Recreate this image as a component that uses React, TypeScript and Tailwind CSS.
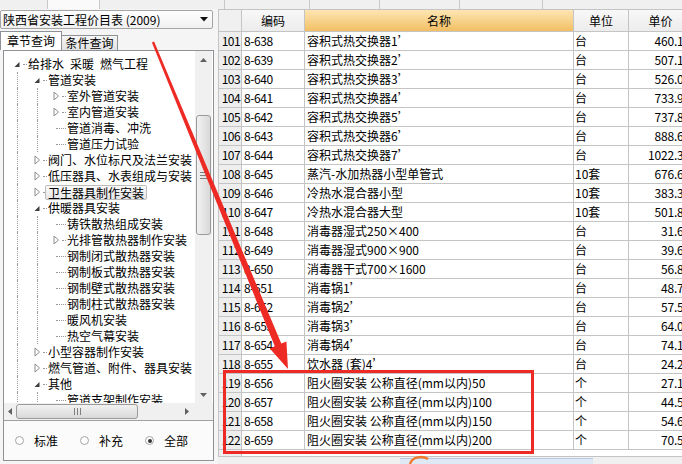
import React from 'react';

type TreeItem = { t: string; lv: number; k: 'open' | 'closed' | 'leaf'; sel?: boolean };

const tree: TreeItem[] = [
  { t: '给排水\u2002采暖\u2002燃气工程', lv: 0, k: 'open' },
  { t: '管道安装', lv: 1, k: 'open' },
  { t: '室外管道安装', lv: 2, k: 'closed' },
  { t: '室内管道安装', lv: 2, k: 'closed' },
  { t: '管道消毒、冲洗', lv: 2, k: 'leaf' },
  { t: '管道压力试验', lv: 2, k: 'leaf' },
  { t: '阀门、水位标尺及法兰安装', lv: 1, k: 'closed' },
  { t: '低压器具、水表组成与安装', lv: 1, k: 'closed' },
  { t: '卫生器具制作安装', lv: 1, k: 'closed', sel: true },
  { t: '供暖器具安装', lv: 1, k: 'open' },
  { t: '铸铁散热组成安装', lv: 2, k: 'leaf' },
  { t: '光排管散热器制作安装', lv: 2, k: 'closed' },
  { t: '钢制闭式散热器安装', lv: 2, k: 'leaf' },
  { t: '钢制板式散热器安装', lv: 2, k: 'leaf' },
  { t: '钢制壁式散热器安装', lv: 2, k: 'leaf' },
  { t: '钢制柱式散热器安装', lv: 2, k: 'leaf' },
  { t: '暖风机安装', lv: 2, k: 'leaf' },
  { t: '热空气幕安装', lv: 2, k: 'leaf' },
  { t: '小型容器制作安装', lv: 1, k: 'closed' },
  { t: '燃气管道、附件、器具安装', lv: 1, k: 'closed' },
  { t: '其他', lv: 1, k: 'open' },
  { t: '管道支架制作安装', lv: 2, k: 'leaf' },
];

const rows: string[][] = [
  ['101', '8-638', '容积式热交换器1’', '台', '460.18'],
  ['102', '8-639', '容积式热交换器2’', '台', '507.12'],
  ['103', '8-640', '容积式热交换器3’', '台', '526.04'],
  ['104', '8-641', '容积式热交换器4’', '台', '733.97'],
  ['105', '8-642', '容积式热交换器5’', '台', '737.85'],
  ['106', '8-643', '容积式热交换器6’', '台', '888.65'],
  ['107', '8-644', '容积式热交换器7’', '台', '1022.35'],
  ['108', '8-645', '蒸汽-水加热器小型单管式', '10套', '676.65'],
  ['109', '8-646', '冷热水混合器小型', '10套', '383.35'],
  ['110', '8-647', '冷热水混合器大型', '10套', '501.85'],
  ['111', '8-648', '消毒器湿式250×400', '台', '31.65'],
  ['112', '8-649', '消毒器湿式900×900', '台', '39.65'],
  ['113', '8-650', '消毒器干式700×1600', '台', '56.85'],
  ['114', '8-651', '消毒锅1’', '台', '48.75'],
  ['115', '8-652', '消毒锅2’', '台', '57.55'],
  ['116', '8-653', '消毒锅3’', '台', '64.05'],
  ['117', '8-654', '消毒锅4’', '台', '74.15'],
  ['118', '8-655', '饮水器 (套)4’', '台', '24.25'],
  ['119', '8-656', '阻火圈安装 公称直径(mm以内)50', '个', '27.15'],
  ['120', '8-657', '阻火圈安装 公称直径(mm以内)100', '个', '44.55'],
  ['121', '8-658', '阻火圈安装 公称直径(mm以内)150', '个', '54.65'],
  ['122', '8-659', '阻火圈安装 公称直径(mm以内)200', '个', '70.55'],
];

const pads = ['pl-[7px]', 'pl-[27px]', 'pl-[46px]'];

const Glyph = ({ k }: { k: TreeItem['k'] }) =>
  k === 'open' ? (
    <svg width="12" height="10" viewBox="0 0 12 10">
      <polygon points="8.5,3 8.5,8 3.5,8" fill="#3c3c3c" />
    </svg>
  ) : (
    <svg width="12" height="10" viewBox="0 0 12 10">
      <polygon points="4,1 8.5,5 4,9" fill="white" stroke="#8c8c8c" strokeWidth="1" />
    </svg>
  );

const TreeRow = ({ it }: { it: TreeItem }) => (
  <div className={`relative h-[16px] flex items-center whitespace-nowrap ${pads[it.lv]}`}>
    {it.lv >= 1 && <div className="absolute left-[13px] top-0 h-full border-l border-dotted border-[#9a9a9a]" />}
    {it.lv >= 2 && <div className="absolute left-[33px] top-0 h-full border-l border-dotted border-[#9a9a9a]" />}
    {it.k === 'leaf' ? (
      <div className="ml-[6px] w-[10px] border-t border-dotted border-[#9a9a9a] mr-[1px]" />
    ) : (
      <>
        <div className="w-[12px] flex justify-center">
          <Glyph k={it.k} />
        </div>
        <div className="w-[4px] border-t border-dotted border-[#9a9a9a] mr-[1px]" />
      </>
    )}
    {it.sel ? (
      <span className="border border-[#bcbcbc] rounded-[2px] bg-gradient-to-b from-[#fafafa] to-[#e6e6e6] px-[2px] leading-[13px] -ml-[3px]">
        {it.t}
      </span>
    ) : (
      <span className="leading-[16px]">{it.t}</span>
    )}
  </div>
);

const Radio = ({ label, on }: { label: string; on?: boolean }) => (
  <div className="flex items-center gap-[10px]">
    <div className="w-[9px] h-[9px] rounded-full border border-[#a4a4a4] bg-white flex items-center justify-center">
      {on && <div className="w-[4px] h-[4px] rounded-full bg-[#333]" />}
    </div>
    <span>{label}</span>
  </div>
);

export default function App() {
  return (
    <div className="relative w-[682px] h-[464px] overflow-hidden bg-[#f5f5f5] text-[12px] text-black font-['Noto_Sans_CJK_SC',sans-serif] flex flex-col">
      {/* toolbar strip */}
      <div className="h-[9px] flex bg-[#f0f0f0] shrink-0">
        <div className="w-[48px] border-r border-[#c8c8c8]" />
        <div className="w-[52px] border-r border-[#c8c8c8] bg-[#fafafa]" />
        <div className="w-[125px] border-r border-[#c8c8c8]" />
        <div className="w-[85px] border-r border-[#c8c8c8]" />
        <div className="w-[70px] border-r border-[#c8c8c8]" />
        <div className="w-[80px] border-r border-[#c8c8c8]" />
        <div className="w-[83px] border-r border-[#c8c8c8]" />
        <div className="flex-1" />
      </div>

      <div className="flex flex-1 min-h-0">
        {/* left panel */}
        <div className="w-[218px] shrink-0 flex flex-col">
          <div className="mt-[1px] h-[19px] w-[213px] border border-[#a5a5a5] rounded-[2px] bg-gradient-to-b from-[#ffffff] to-[#f0f0f0] flex items-center pl-[2px] pr-[4px]">
            <span className="flex-1 leading-[16px]">陕西省安装工程价目表 (2009)</span>
            <svg width="8" height="5" viewBox="0 0 8 5">
              <polygon points="0,0 8,0 4,4.5" fill="#111" />
            </svg>
          </div>
          <div className="h-[21px] flex items-end">
            <div className="h-[19px] w-[62px] border border-b-0 border-[#8e9297] bg-white flex items-center justify-center">
              章节查询
            </div>
            <div className="h-[15px] w-[56px] border border-b-0 border-l-0 border-[#8e9297] bg-gradient-to-b from-[#f6f6f6] to-[#e2e2e2] flex items-center justify-center">
              条件查询
            </div>
          </div>
          <div className="ml-[3px] w-[211px] h-[411px] border border-[#8e9297] bg-white flex flex-col">
            {/* tree */}
            <div className="h-[370px] flex flex-col border-b border-[#a0a0a0]">
              <div className="flex flex-1 min-h-0">
                <div className="flex-1 overflow-hidden pt-[5px]">
                  {tree.map((it, i) => (
                    <TreeRow key={i} it={it} />
                  ))}
                </div>
                <div className="w-[17px] mr-[1px] bg-[#f0f0f0] flex flex-col items-center">
                  <div className="h-[17px] flex items-center justify-center">
                    <svg width="7" height="4" viewBox="0 0 7 4">
                      <polygon points="3.5,0 7,4 0,4" fill="#606060" />
                    </svg>
                  </div>
                  <div className="mt-[47px] h-[120px] w-[15px] rounded-[3px] border border-[#9a9a9a] bg-gradient-to-r from-[#f2f2f2] to-[#d9d9d9] flex flex-col items-center justify-center gap-[2px]">
                    <div className="w-[7px] h-px bg-[#808080]" />
                    <div className="w-[7px] h-px bg-[#808080]" />
                    <div className="w-[7px] h-px bg-[#808080]" />
                  </div>
                  <div className="flex-1" />
                  <div className="h-[17px] flex items-center justify-center">
                    <svg width="7" height="4" viewBox="0 0 7 4">
                      <polygon points="0,0 7,0 3.5,4" fill="#606060" />
                    </svg>
                  </div>
                </div>
              </div>
              <div className="h-[17px] flex bg-[#f0f0f0]">
                <div className="w-[12px] flex items-center justify-center">
                  <svg width="4" height="7" viewBox="0 0 4 7">
                    <polygon points="4,0 4,7 0,3.5" fill="#606060" />
                  </svg>
                </div>
                <div className="w-[122px] h-[15px] mt-[1px] rounded-[3px] border border-[#9a9a9a] bg-gradient-to-b from-[#f2f2f2] to-[#d9d9d9] flex items-center justify-center gap-[2px]">
                  <div className="w-px h-[7px] bg-[#808080]" />
                  <div className="w-px h-[7px] bg-[#808080]" />
                  <div className="w-px h-[7px] bg-[#808080]" />
                </div>
                <div className="flex-1 flex items-center justify-end pr-[6px]">
                  <svg width="4" height="7" viewBox="0 0 4 7">
                    <polygon points="0,0 4,3.5 0,7" fill="#606060" />
                  </svg>
                </div>
                <div className="w-[18px]" />
              </div>
            </div>
            {/* radios */}
            <div className="flex-1 flex items-center pl-[11px] gap-[22px] bg-[#fbfbfb]">
              <Radio label="标准" />
              <Radio label="补充" />
              <Radio label="全部" on />
            </div>
          </div>
        </div>

        {/* right grid */}
        <div className="flex-1 flex flex-col overflow-hidden">
          <div className="border-l border-t border-[#c4c4c4] bg-white flex flex-col w-[480px]">
            <div className="h-[22px] flex border-b border-[#c4c4c4]">
              <div className="w-[23px] border-r border-[#c4c4c4] bg-[#f0f0f0]" />
              <div className="w-[63px] border-r border-[#c4c4c4] bg-gradient-to-b from-[#f8f8f8] to-[#ececec] flex items-center justify-center">编码</div>
              <div className="w-[269px] border-r border-[#c4c4c4] bg-gradient-to-b from-[#fde6b2] to-[#f2bf62] flex items-center justify-center">名称</div>
              <div className="w-[55px] border-r border-[#c4c4c4] bg-gradient-to-b from-[#f8f8f8] to-[#ececec] flex items-center justify-center">单位</div>
              <div className="w-[64px] border-r border-[#c4c4c4] bg-gradient-to-b from-[#f8f8f8] to-[#ececec] flex items-center justify-center">单价</div>
            </div>
            {rows.map((r) => (
              <div key={r[0]} className="h-[19px] flex border-b border-[#c4c4c4] whitespace-nowrap leading-[18px]">
                <div className="w-[23px] border-r border-[#c4c4c4] bg-[#eeeeee] text-right pr-[1px] tracking-[-0.6px]">{r[0]}</div>
                <div className="w-[63px] border-r border-[#c4c4c4] pl-[2px] tracking-[-0.4px]">{r[1]}</div>
                <div className="w-[269px] border-r border-[#c4c4c4] pl-[2px]">{r[2]}</div>
                <div className="w-[55px] border-r border-[#c4c4c4] pl-[1px]">{r[3]}</div>
                <div className="w-[64px] border-r border-[#c4c4c4] text-right pr-[2px] tracking-[-0.2px]">{r[4]}</div>
              </div>
            ))}
            <div className="h-[7px] flex border-b border-[#c4c4c4]">
              <div className="w-[23px] border-r border-[#c4c4c4] bg-[#eeeeee]" />
            </div>
          </div>
          <div className="flex-1 flex bg-[#f0f0f0]">
            <div className="w-[182px]" />
            <div className="w-[193px] mt-[1px] bg-[#dfe9f5] border-t border-[#b7c9e0] relative">
              <svg className="absolute -top-[4px] left-[8px]" width="24" height="10" viewBox="0 0 24 10">
                <path d="M2,9 C4,2 14,0 20,4" stroke="#f07a30" strokeWidth="2.5" fill="none" />
              </svg>
            </div>
          </div>
        </div>
      </div>

      {/* annotations */}
      <svg className="absolute left-0 top-0 pointer-events-none" width="682" height="464" viewBox="0 0 682 464">
        <polygon
          points="154.1,41.5 281.3,343.6 286.4,341.5 288,369 269.8,348.4 274.8,346.3 151.9,42.5"
          fill="#ee2a24"
        />
      </svg>
      <div className="absolute left-[223px] top-[370px] w-[311px] h-[84px] border-[3px] border-[#ee2a24] pointer-events-none" />
    </div>
  );
}
